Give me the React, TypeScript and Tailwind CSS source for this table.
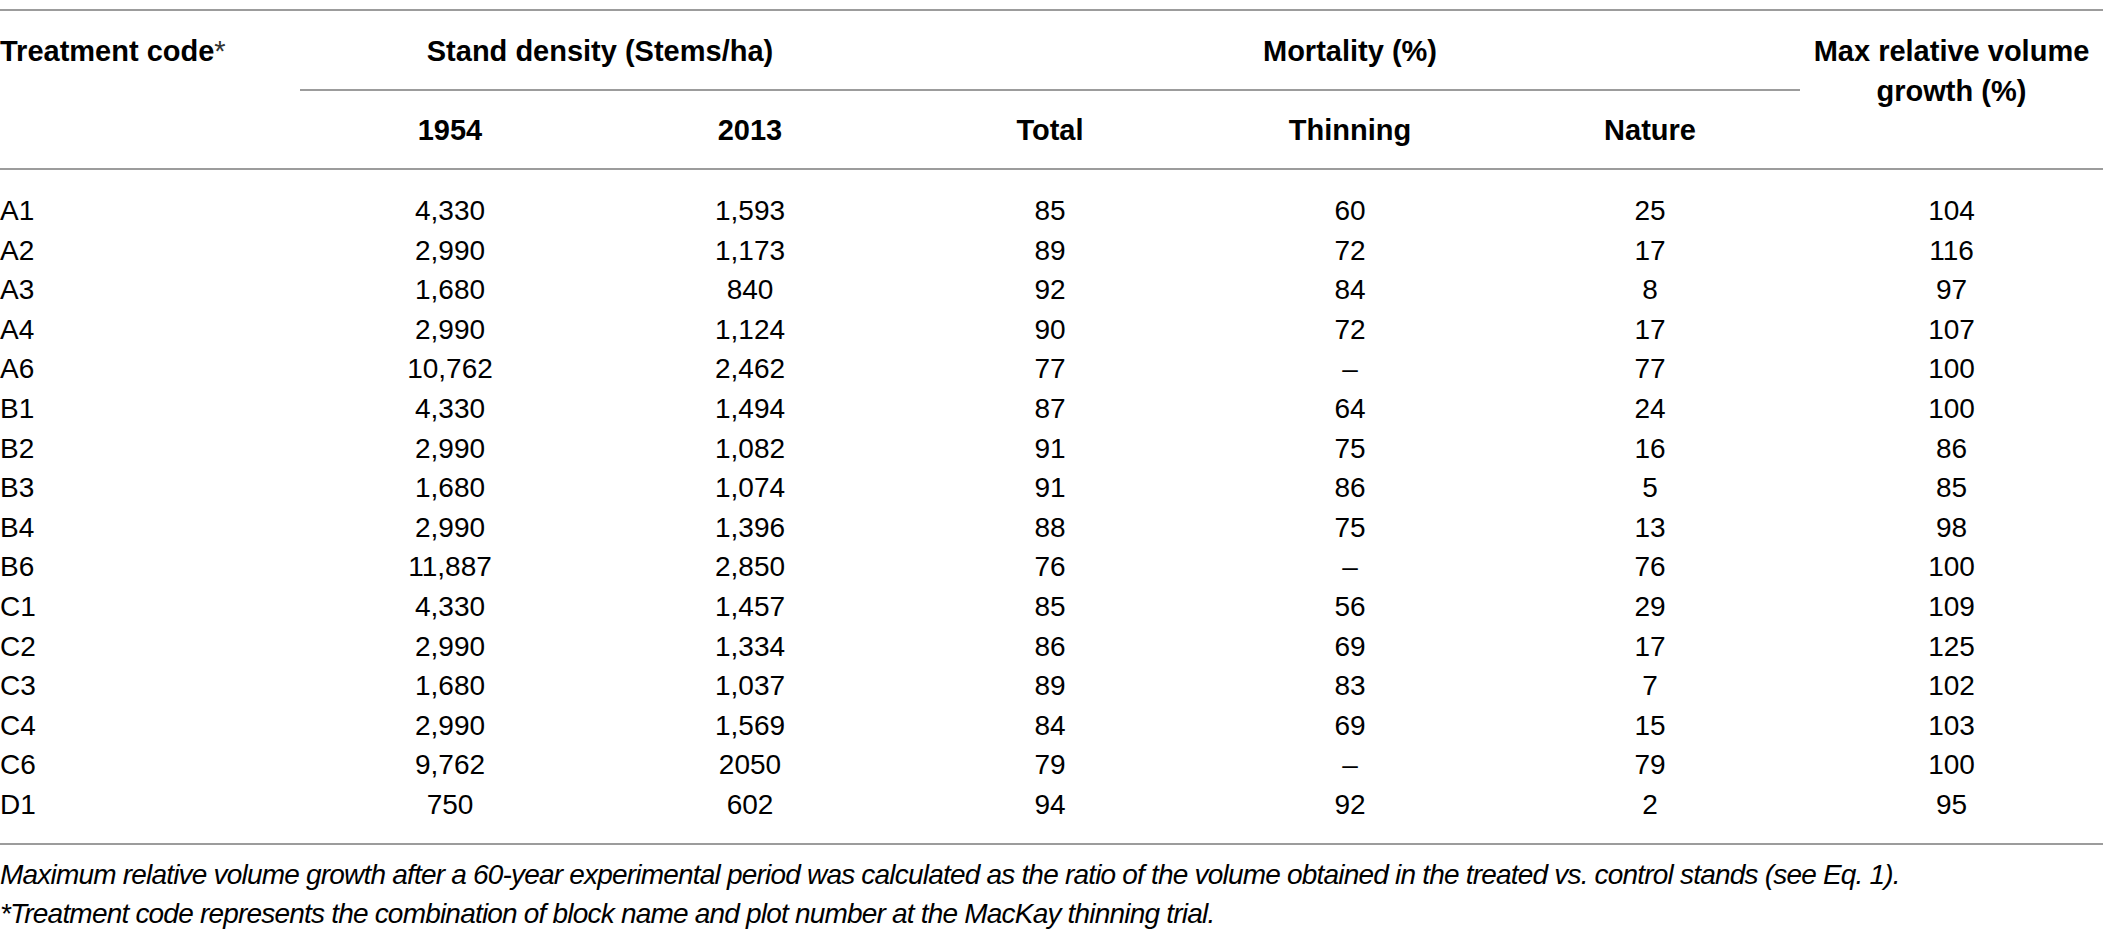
import React from 'react';

type Row = [string, string, string, string, string, string, string];

const rows: Row[] = [
  ['A1', '4,330', '1,593', '85', '60', '25', '104'],
  ['A2', '2,990', '1,173', '89', '72', '17', '116'],
  ['A3', '1,680', '840', '92', '84', '8', '97'],
  ['A4', '2,990', '1,124', '90', '72', '17', '107'],
  ['A6', '10,762', '2,462', '77', '–', '77', '100'],
  ['B1', '4,330', '1,494', '87', '64', '24', '100'],
  ['B2', '2,990', '1,082', '91', '75', '16', '86'],
  ['B3', '1,680', '1,074', '91', '86', '5', '85'],
  ['B4', '2,990', '1,396', '88', '75', '13', '98'],
  ['B6', '11,887', '2,850', '76', '–', '76', '100'],
  ['C1', '4,330', '1,457', '85', '56', '29', '109'],
  ['C2', '2,990', '1,334', '86', '69', '17', '125'],
  ['C3', '1,680', '1,037', '89', '83', '7', '102'],
  ['C4', '2,990', '1,569', '84', '69', '15', '103'],
  ['C6', '9,762', '2050', '79', '–', '79', '100'],
  ['D1', '750', '602', '94', '92', '2', '95'],
];

const cols = 'grid grid-cols-[300px_300px_300px_300px_300px_300px_303px]';

const App: React.FC = () => {
  return (
    <div className="w-[2103px] h-[942px] bg-white text-black font-['Liberation_Sans',Arial,sans-serif] overflow-hidden">
      <div className="pt-[9px]">
        {/* Header */}
        <div className={`${cols} border-t-2 border-b-2 border-[#9c9c9c] text-[29px] font-bold leading-[40px]`}>
          <div className="row-span-2 pt-[20px]">
            Treatment code<span className="font-normal text-[#333]">*</span>
          </div>
          <div className="col-span-2 h-[80px] flex items-center justify-center border-b-2 border-[#9c9c9c] pt-[2px]">
            Stand density (Stems/ha)
          </div>
          <div className="col-span-3 h-[80px] flex items-center justify-center border-b-2 border-[#9c9c9c] pt-[2px]">
            Mortality (%)
          </div>
          <div className="row-span-2 pt-[20px] text-center leading-[40px]">
            Max relative volume
            <br />
            growth (%)
          </div>
          <div className="h-[77px] flex items-center justify-center">1954</div>
          <div className="h-[77px] flex items-center justify-center">2013</div>
          <div className="h-[77px] flex items-center justify-center">Total</div>
          <div className="h-[77px] flex items-center justify-center">Thinning</div>
          <div className="h-[77px] flex items-center justify-center">Nature</div>
        </div>

        {/* Body */}
        <div className="pt-[21px] pb-[18px] border-b-2 border-[#9c9c9c] text-[28px] leading-[39.6px]">
          {rows.map((r) => (
            <div key={r[0]} className={`${cols} h-[39.6px]`}>
              <div>{r[0]}</div>
              {r.slice(1).map((v, i) => (
                <div key={i} className="text-center">
                  {v}
                </div>
              ))}
            </div>
          ))}
        </div>

        {/* Footnotes */}
        <div className="pt-[10px] text-[28px] italic leading-[39px] tracking-[-0.8px]">
          <p>
            Maximum relative volume growth after a 60-year experimental period was calculated as the ratio of the volume obtained in the treated vs. control stands (see Eq. 1).
          </p>
          <p>*Treatment code represents the combination of block name and plot number at the MacKay thinning trial.</p>
        </div>
      </div>
    </div>
  );
};

export default App;
